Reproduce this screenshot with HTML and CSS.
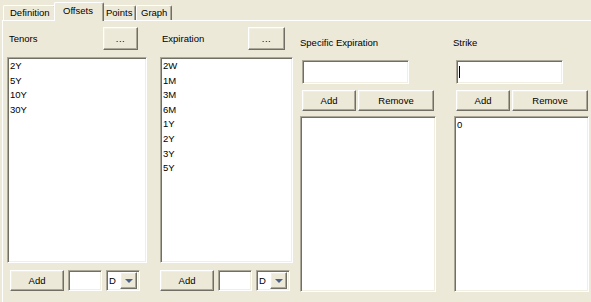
FILE: index.html
```html
<!DOCTYPE html>
<html>
<head>
<meta charset="utf-8">
<link rel="stylesheet" href="styles.css">
</head>
<body>
<div class="tabs">
  <div class="tab t-def">Definition</div>
  <div class="tab active">Offsets</div>
  <div class="tab t-points">Points</div>
  <div class="tab t-graph">Graph</div>
</div>
<div class="panel">
  <div class="col col-tenors">
    <div class="head"><span class="label">Tenors</span><div class="btn dots">...</div></div>
    <div class="sunken list tall">
      <div class="item">2Y</div><div class="item">5Y</div><div class="item">10Y</div><div class="item">30Y</div>
    </div>
    <div class="foot">
      <div class="btn add">Add</div>
      <div class="sunken field"></div>
      <div class="sunken combo"><span class="cval">D</span><span class="btn arrow"><span class="tri"></span></span></div>
    </div>
  </div>
  <div class="col col-exp">
    <div class="head"><span class="label">Expiration</span><div class="btn dots">...</div></div>
    <div class="sunken list tall">
      <div class="item">2W</div><div class="item">1M</div><div class="item">3M</div><div class="item">6M</div>
      <div class="item">1Y</div><div class="item">2Y</div><div class="item">3Y</div><div class="item">5Y</div>
    </div>
    <div class="foot">
      <div class="btn add">Add</div>
      <div class="sunken field"></div>
      <div class="sunken combo"><span class="cval">D</span><span class="btn arrow"><span class="tri"></span></span></div>
    </div>
  </div>
  <div class="col col-spec">
    <div class="label2">Specific Expiration</div>
    <div class="sunken input"></div>
    <div class="btnrow"><div class="btn add">Add</div><div class="btn remove">Remove</div></div>
    <div class="sunken list short"></div>
  </div>
  <div class="col col-strike">
    <div class="label2">Strike</div>
    <div class="sunken input"><span class="caret"></span></div>
    <div class="btnrow"><div class="btn add">Add</div><div class="btn remove">Remove</div></div>
    <div class="sunken list short"><div class="item">0</div></div>
  </div>
</div>
</body>
</html>
```

FILE: styles.css
```css
* { box-sizing: border-box; }
html, body { margin: 0; padding: 0; }
body {
  width: 591px;
  height: 302px;
  overflow: hidden;
  background: #ECE9D8;
  font-family: "Liberation Sans", Arial, sans-serif;
  font-size: 9.5px;
  color: #000;
}
.tabs {
  display: flex;
  align-items: flex-end;
  height: 20px;
  padding-left: 3px;
}
.tab {
  height: 15px;
  line-height: 14px;
  padding: 0 5px 0 6px;
  border-top: 1px solid #fff;
  border-left: 1px solid #fff;
  border-right: 1px solid #716F64;
  box-shadow: inset -1px 0 #ACA899;
  border-radius: 2px 2px 0 0;
  white-space: nowrap;
}
.tab.t-def { width: 53px; }
.tab.active {
  width: 50px;
  height: 19px;
  line-height: 16px;
  margin: 0 -2px -1px -2px;
  padding: 0 0 0 8px;
  position: relative;
  z-index: 1;
  background: #ECE9D8;
}
.tab.t-points { width: 34px; border-left: none; padding: 0 0 0 4px; }
.tab.t-graph { width: 36px; padding: 0 0 0 4px; }
.panel {
  margin-left: 2px;
  height: 282px;
  border-top: 1px solid #fff;
  border-left: 1px solid #fff;
  display: flex;
  padding-left: 4px;
}
.col { display: flex; flex-direction: column; }
.col-tenors { width: 140px; }
.col-exp { width: 133px; margin-left: 13px; }
.col-spec { width: 136px; margin-left: 7px; }
.col-strike { width: 135px; margin-left: 18px; }

.sunken {
  background: #fff;
  border: 1px solid;
  border-color: #ACA899 #fff #fff #ACA899;
  box-shadow: inset 1px 1px #716F64, inset -1px -1px #F1EFE2;
}
.btn {
  background: #ECE9D8;
  border: 1px solid;
  border-color: #fff #716F64 #716F64 #fff;
  box-shadow: inset -1px -1px #ACA899, inset 1px 1px #F1EFE2;
  display: flex;
  align-items: center;
  justify-content: center;
}
.head {
  margin-top: 6px;
  height: 23px;
  display: flex;
  align-items: center;
  justify-content: space-between;
}
.head .label { padding-left: 2px; }
.col-tenors .dots { width: 35px; height: 23px; margin-right: 9px; }
.col-exp .dots { width: 37px; height: 23px; margin-right: 8px; padding-bottom: 1px; }
.dots { letter-spacing: 0.5px; }

.list { padding: 1px 2px; }
.list .item { height: 14.6px; line-height: 14.6px; }
.tall { margin-top: 7px; height: 206px; }
.foot {
  margin-top: 7px;
  height: 21px;
  display: flex;
  gap: 4px;
}
.col-tenors .foot { padding-left: 3px; }
.foot .add { width: 54px; height: 21px; }
.foot .field { width: 34px; height: 21px; }
.combo {
  width: 34px;
  height: 21px;
  display: flex;
  align-items: center;
  padding: 2px;
}
.cval { flex: 1; padding-left: 0; line-height: 15px; }
.arrow { width: 17px; height: 17px; }
.tri {
  width: 0; height: 0;
  border-left: 4px solid transparent;
  border-right: 4px solid transparent;
  border-top: 4px solid #4D6185;
}

.label2 { margin-top: 15px; height: 14px; line-height: 14px; }
.col-strike .label2 { margin-left: -1px; }
.input { margin: 10px 0 0 2px; width: 107px; height: 24px; padding: 5px 0 0 2px; }
.caret { display: block; width: 1px; height: 12px; background: #000; }
.btnrow { margin: 6px 0 0 2px; display: flex; gap: 2px; height: 21px; }
.btnrow .add { width: 54px; }
.btnrow .remove { width: 76px; }
.short { margin-top: 5px; height: 176px; }
```
